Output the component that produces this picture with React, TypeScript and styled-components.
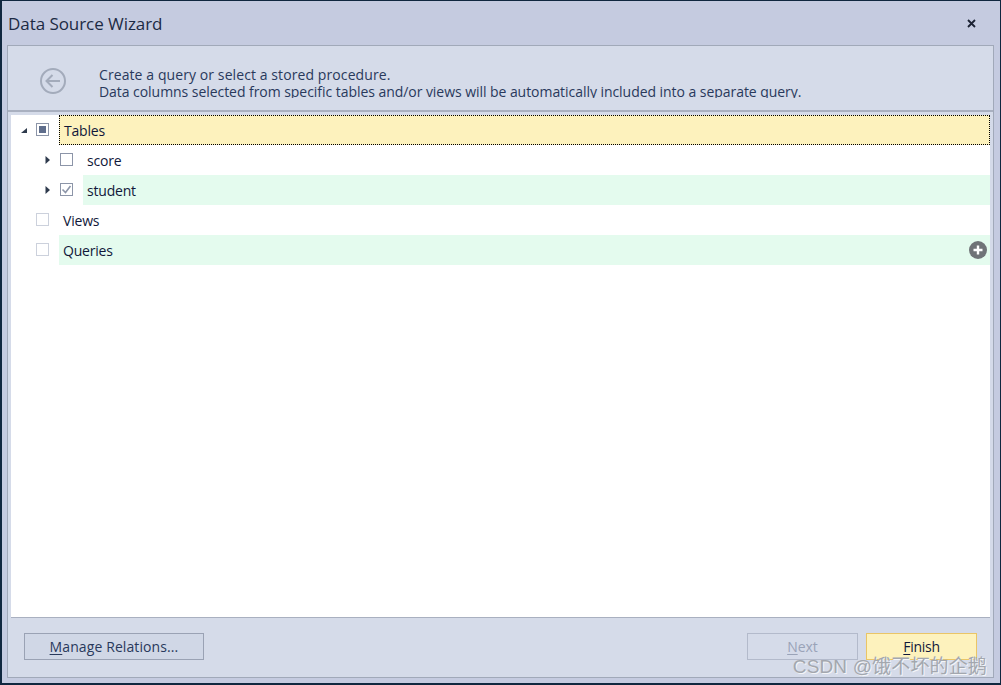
import React from "react";
import styled, { createGlobalStyle } from "styled-components";

const Global = createGlobalStyle`
  html, body { margin: 0; padding: 0; background: #c5cbe0; }
  body { font-family: "Open Sans", "Noto Sans", "Liberation Sans", sans-serif; }
  * { box-sizing: border-box; }
`;

const Win = styled.div`
  position: relative;
  width: 1001px;
  height: 685px;
  display: flex;
  flex-direction: column;
  background: #c5cbe0;
  border: 2px solid #10273f;
  border-width: 1px 1px 2px 2px;
  overflow: hidden;
`;
const TitleBar = styled.div`
  height: 44px;
  flex: none;
  display: flex;
  align-items: center;
  justify-content: space-between;
  padding: 0 24px 0 6px;
`;
const Title = styled.div`
  font-size: 17px;
  letter-spacing: -0.06px;
  color: #1c2a44;
`;
const Close = styled.svg`
  width: 9px;
  height: 9px;
  display: block;
`;
const Panel = styled.div`
  flex: 1;
  margin: 0 6px 5px 5px;
  display: flex;
  flex-direction: column;
  background: #d5dbe9;
  border: 1px solid #a1a9b9;
`;
const Header = styled.div`
  height: 66px;
  flex: none;
  display: flex;
  align-items: flex-start;
  padding: 21px 0 0 31px;
  border-bottom: 2px solid #a9b0c0;
`;
const BackIcon = styled.svg`
  width: 28px;
  height: 28px;
  flex: none;
`;
const Desc = styled.div`
  margin: -1px 0 0 32px;
  height: 32px;
  overflow: hidden;
  font-size: 14px;
  line-height: 17px;
  color: #29395c;
`;
const DescLine = styled.div<{ $s: number }>`
  white-space: nowrap;
  letter-spacing: ${(p) => p.$s}px;
`;
const Tree = styled.div`
  flex: 1;
  margin: 3px 3px 0 3px;
  background: #fff;
  border-bottom: 1px solid #a9b0c0;
`;
const Row = styled.div<{ $level: number }>`
  height: 30px;
  display: flex;
  align-items: center;
  padding-left: ${(p) => 10 + p.$level * 24}px;
`;
const ExpanderSlot = styled.div`
  width: 15px;
  flex: none;
  display: flex;
  align-items: center;
`;
const Expander = styled.svg`
  width: 7px;
  height: 8px;
  display: block;
`;
const Check = styled.div<{ $dim?: boolean }>`
  position: relative;
  width: 13px;
  height: 13px;
  flex: none;
  margin-top: -1px;
  border: 1px solid ${(p) => (p.$dim ? "#ccd1dc" : "#8c95a8")};
  background: #fff;
  display: flex;
  align-items: center;
  justify-content: center;
`;
const Indeterminate = styled.div`
  width: 7px;
  height: 7px;
  background: #5f6e8c;
`;
const Tick = styled.svg`
  width: 11px;
  height: 11px;
  display: block;
`;
const Cell = styled.div<{ $tone?: "focus" | "green" }>`
  flex: 1;
  height: 30px;
  margin-left: 10px;
  padding: 0 0 0 4px;
  display: flex;
  align-items: center;
  justify-content: space-between;
  font-size: 14px;
  letter-spacing: -0.2px;
  color: #10183a;
  background: ${(p) => (p.$tone === "focus" ? "#fdf2bd" : p.$tone === "green" ? "#e4fbee" : "transparent")};
  ${(p) => (p.$tone === "focus" ? "border: 1px dotted #000; padding-left: 4px;" : "")}
`;
const AddIcon = styled.svg`
  width: 18px;
  height: 18px;
  display: block;
  margin-right: 3px;
`;
const Footer = styled.div`
  height: 59px;
  flex: none;
  display: flex;
  justify-content: space-between;
  padding: 15px 16px 0 16px;
`;
const Buttons = styled.div`
  display: flex;
  gap: 8px;
`;
const Btn = styled.div<{ $w: number; $kind?: "off" | "hot"; $s?: number }>`
  width: ${(p) => p.$w}px;
  height: 27px;
  display: flex;
  align-items: center;
  justify-content: center;
  font-size: 14px;
  letter-spacing: ${(p) => p.$s ?? 0}px;
  border: 1px solid ${(p) => (p.$kind === "off" ? "#b3bacb" : p.$kind === "hot" ? "#eac566" : "#9aa2b4")};
  color: ${(p) => (p.$kind === "off" ? "#9aa3b8" : p.$kind === "hot" ? "#10183a" : "#29395c")};
  background: ${(p) => (p.$kind === "off" ? "transparent" : p.$kind === "hot" ? "#fdf2bd" : "#d0d7e6")};
  u { text-underline-offset: 2px; }
`;
const Watermark = styled.div`
  position: absolute;
  right: 13px;
  bottom: 5px;
  font-family: "Liberation Sans", "Noto Sans CJK SC", sans-serif;
  font-size: 19px;
  letter-spacing: 0.15px;
  line-height: 22px;
  white-space: nowrap;
  color: #a3a7ae;
  text-shadow: 1px 1px 0 #f4f5f7;
`;

const Arrow = ({ open }: { open?: boolean }) => (
  <Expander viewBox="0 0 7 8">
    {open ? <polygon points="0,7 6,7 6,2" fill="#2e3a4d" /> : <polygon points="0.5,0 5,4 0.5,8" fill="#2e3a4d" />}
  </Expander>
);

export default function App() {
  return (
    <>
      <Global />
      <Win>
        <TitleBar>
          <Title>Data Source Wizard</Title>
          <Close viewBox="0 0 9 9">
            <path d="M1 1L8 8M8 1L1 8" stroke="#1c2233" strokeWidth="1.8" />
          </Close>
        </TitleBar>
        <Panel>
          <Header>
            <BackIcon viewBox="0 0 28 28">
              <circle cx="14" cy="14" r="12" fill="none" stroke="#a3abbb" strokeWidth="2" />
              <path d="M21 14H8M13.5 8L7.5 14L13.5 20" fill="none" stroke="#a3abbb" strokeWidth="2" />
            </BackIcon>
            <Desc>
              <DescLine $s={0.09}>Create a query or select a stored procedure.</DescLine>
              <DescLine $s={-0.05}>Data columns selected from specific tables and/or views will be automatically included into a separate query.</DescLine>
            </Desc>
          </Header>
          <Tree>
            <Row $level={0}>
              <ExpanderSlot><Arrow open /></ExpanderSlot>
              <Check><Indeterminate /></Check>
              <Cell $tone="focus">Tables</Cell>
            </Row>
            <Row $level={1}>
              <ExpanderSlot><Arrow /></ExpanderSlot>
              <Check />
              <Cell>score</Cell>
            </Row>
            <Row $level={1}>
              <ExpanderSlot><Arrow /></ExpanderSlot>
              <Check>
                <Tick viewBox="0 0 11 11">
                  <path d="M1.5 5.5L4.5 8.5L9.5 2" fill="none" stroke="#8c95a8" strokeWidth="1.6" />
                </Tick>
              </Check>
              <Cell $tone="green">student</Cell>
            </Row>
            <Row $level={0}>
              <ExpanderSlot />
              <Check $dim />
              <Cell>Views</Cell>
            </Row>
            <Row $level={0}>
              <ExpanderSlot />
              <Check $dim />
              <Cell $tone="green">
                Queries
                <AddIcon viewBox="0 0 18 18">
                  <circle cx="9" cy="9" r="9" fill="#6f7377" />
                  <path d="M9 4.5V13.5M4.5 9H13.5" stroke="#fff" strokeWidth="2.4" />
                </AddIcon>
              </Cell>
            </Row>
          </Tree>
          <Footer>
            <Btn $w={180} $s={0.1}><span><u>M</u>anage Relations...</span></Btn>
            <Buttons>
              <Btn $w={111} $kind="off"><span><u>N</u>ext</span></Btn>
              <Btn $w={111} $kind="hot" $s={-0.3}><span><u>F</u>inish</span></Btn>
            </Buttons>
          </Footer>
        </Panel>
        <Watermark>CSDN @饿不坏的企鹅</Watermark>
      </Win>
    </>
  );
}
